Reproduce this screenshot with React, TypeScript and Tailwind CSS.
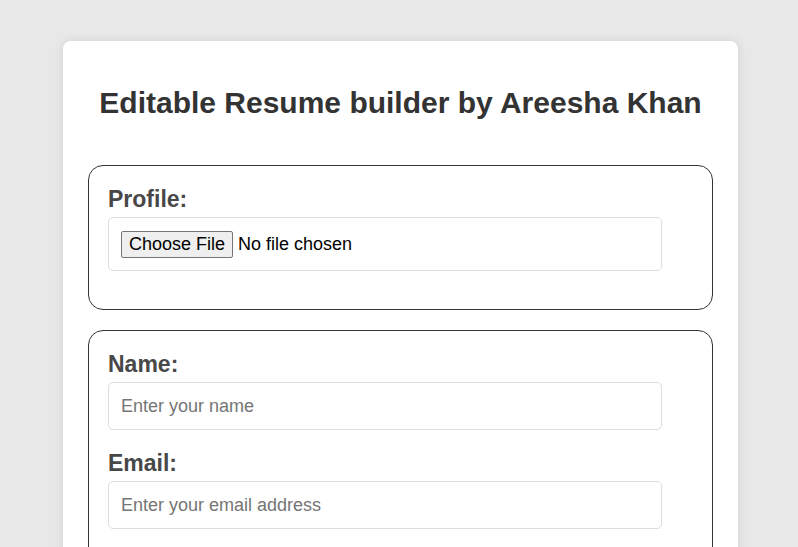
import React from "react";

const labelCls = "block text-[23px] font-bold text-[#484848] pt-[2px] leading-[25px] mb-[5px]";

// Simple field block: label above a text input
const Field = ({ label, placeholder, type = "text" }: { label: string; placeholder: string; type?: string }) => (
  <div>
    <label className={labelCls}>{label}</label>
    <input
      type={type}
      placeholder={placeholder}
      className="block w-[554px] h-[48px] px-[12px] mb-[19px] border border-[#ddd] rounded-[5px] text-[18px] text-[#333] placeholder:text-[#757575] outline-none"
    />
  </div>
);

export default function App() {
  return (
    <div className="min-h-screen bg-[#e8e8e8] pt-[41px] pb-[40px] pl-[63px] font-['Liberation_Sans',Arial,sans-serif]">
      <div className="w-[675px] bg-white rounded-[8px] shadow-[0_0_10px_rgba(0,0,0,0.1)] px-[25px] pt-[44px] pb-[25px]">
        <h1 className="text-center text-[30px] font-bold text-[#333] leading-[35px] mb-[45px]">
          Editable Resume builder by Areesha Khan
        </h1>

        {/* Profile picture */}
        <section className="border border-[#333] rounded-[15px] p-[19px] mb-[20px]">
          <label className={labelCls}>Profile:</label>
          <div className="w-[554px] h-[54px] px-[12px] flex items-center border border-[#ddd] rounded-[5px] mb-[19px]">
            <input
              type="file"
              className="text-[18px] text-black file:text-[18px] file:text-black file:bg-[#efefef] file:border file:border-solid file:border-[#767676] file:rounded-[2px] file:px-[7px] file:py-[2px] file:mr-[5px] file:leading-[21px]"
            />
          </div>
        </section>

        {/* Personal info */}
        <section className="border border-[#333] rounded-[15px] p-[19px] mb-[20px]">
          <Field label="Name:" placeholder="Enter your name" />
          <Field label="Email:" placeholder="Enter your email address" type="email" />
          <Field label="Phone:" placeholder="Enter your phone number" />
        </section>

        <section className="border border-[#333] rounded-[15px] p-[19px]">
          <Field label="Education:" placeholder="Enter your education" />
          <Field label="Skills:" placeholder="Enter your skills" />
        </section>
      </div>
    </div>
  );
}
